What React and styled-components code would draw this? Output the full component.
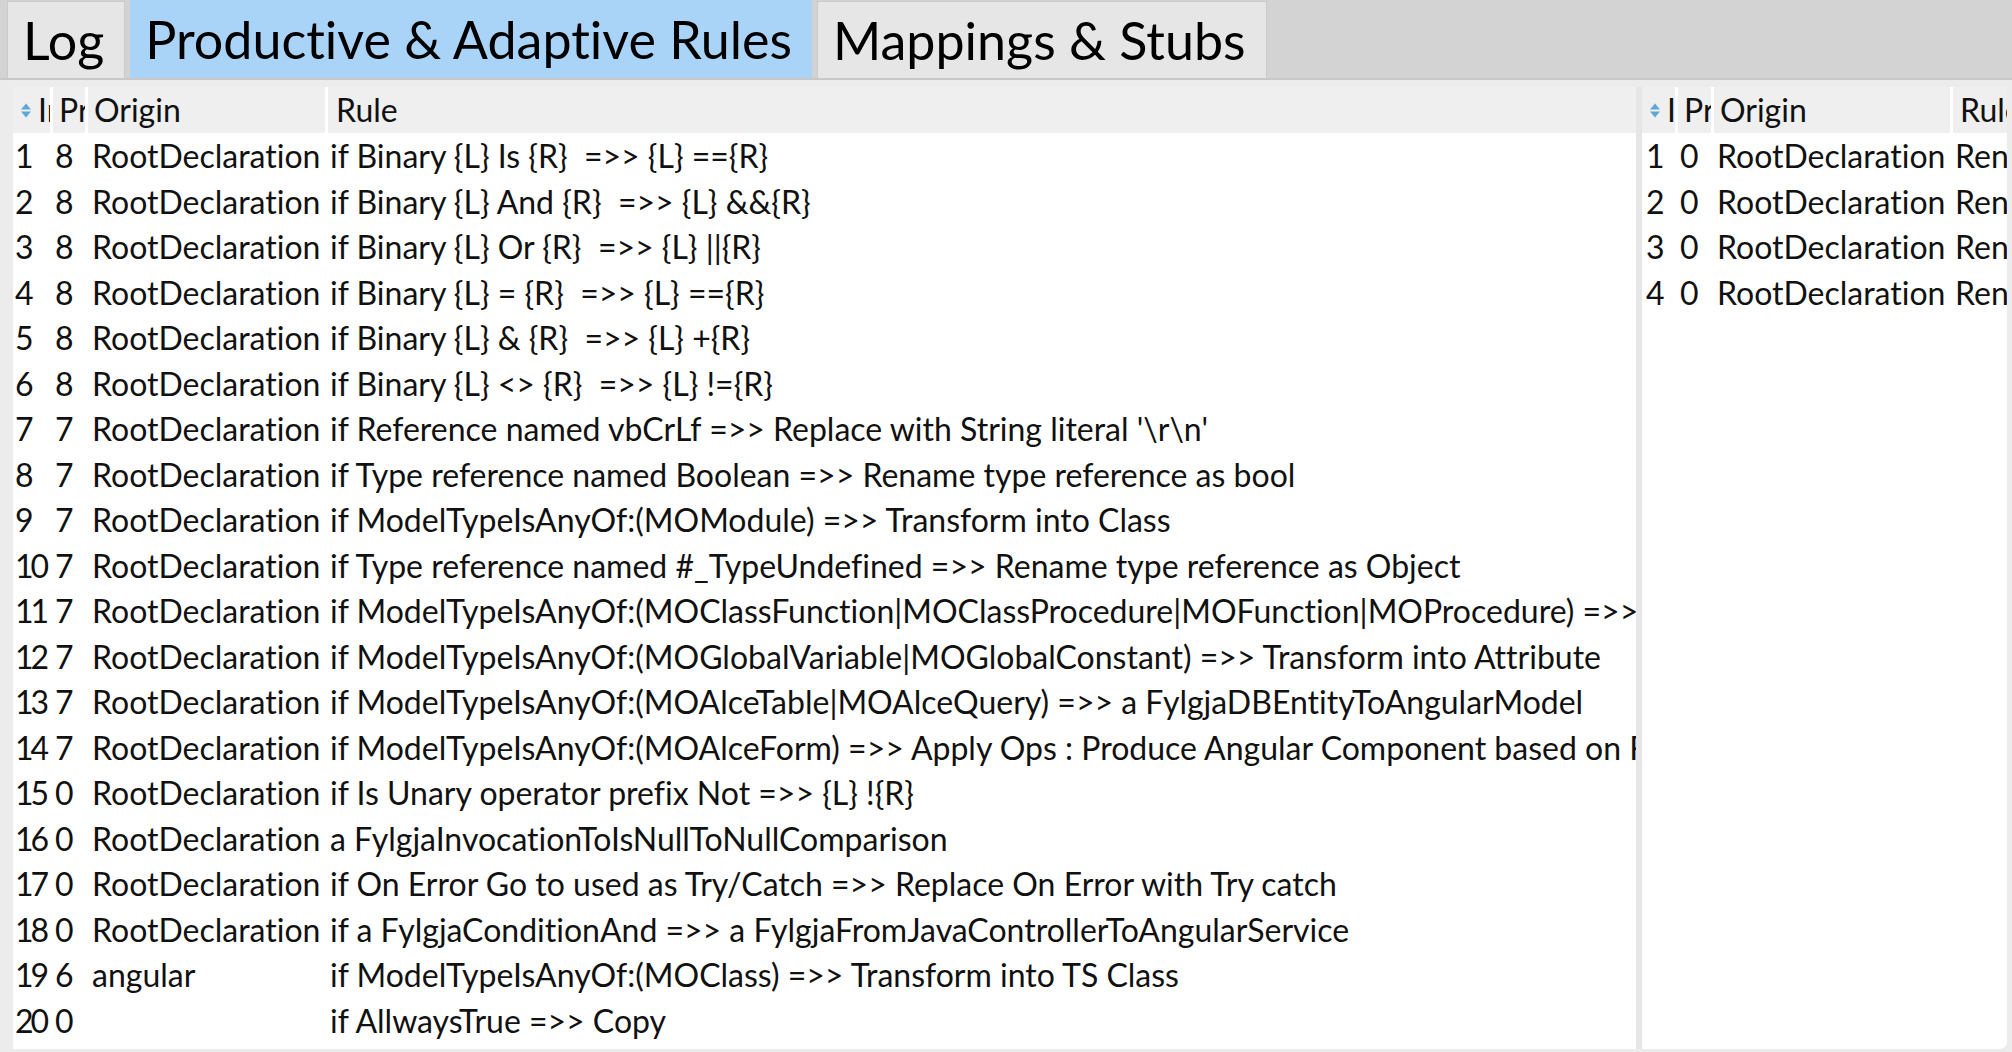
import styled, { createGlobalStyle } from 'styled-components';

// ── Data ─────────────────────────────────────────────────────────────────────
const rules = [
  ['1', '8', 'RootDeclaration', 'if Binary {L} Is {R}  =>> {L} =={R}'],
  ['2', '8', 'RootDeclaration', 'if Binary {L} And {R}  =>> {L} &&{R}'],
  ['3', '8', 'RootDeclaration', 'if Binary {L} Or {R}  =>> {L} ||{R}'],
  ['4', '8', 'RootDeclaration', 'if Binary {L} = {R}  =>> {L} =={R}'],
  ['5', '8', 'RootDeclaration', 'if Binary {L} & {R}  =>> {L} +{R}'],
  ['6', '8', 'RootDeclaration', 'if Binary {L} <> {R}  =>> {L} !={R}'],
  ['7', '7', 'RootDeclaration', "if Reference named vbCrLf =>> Replace with String literal '\\r\\n'"],
  ['8', '7', 'RootDeclaration', 'if Type reference named Boolean =>> Rename type reference as bool'],
  ['9', '7', 'RootDeclaration', 'if ModelTypeIsAnyOf:(MOModule) =>> Transform into Class'],
  ['10', '7', 'RootDeclaration', 'if Type reference named #_TypeUndefined =>> Rename type reference as Object'],
  ['11', '7', 'RootDeclaration', 'if ModelTypeIsAnyOf:(MOClassFunction|MOClassProcedure|MOFunction|MOProcedure) =>> Transform into Method'],
  ['12', '7', 'RootDeclaration', 'if ModelTypeIsAnyOf:(MOGlobalVariable|MOGlobalConstant) =>> Transform into Attribute'],
  ['13', '7', 'RootDeclaration', 'if ModelTypeIsAnyOf:(MOAlceTable|MOAlceQuery) =>> a FylgjaDBEntityToAngularModel'],
  ['14', '7', 'RootDeclaration', 'if ModelTypeIsAnyOf:(MOAlceForm) =>> Apply Ops : Produce Angular Component based on Form'],
  ['15', '0', 'RootDeclaration', 'if Is Unary operator prefix Not =>> {L} !{R}'],
  ['16', '0', 'RootDeclaration', 'a FylgjaInvocationToIsNullToNullComparison'],
  ['17', '0', 'RootDeclaration', 'if On Error Go to used as Try/Catch =>> Replace On Error with Try catch'],
  ['18', '0', 'RootDeclaration', 'if a FylgjaConditionAnd =>> a FylgjaFromJavaControllerToAngularService'],
  ['19', '6', 'angular', 'if ModelTypeIsAnyOf:(MOClass) =>> Transform into TS Class'],
  ['20', '0', '', 'if AllwaysTrue =>> Copy'],
];

const adaptive = [
  ['1', '0', 'RootDeclaration', 'Rename reference'],
  ['2', '0', 'RootDeclaration', 'Rename reference'],
  ['3', '0', 'RootDeclaration', 'Rename reference'],
  ['4', '0', 'RootDeclaration', 'Rename reference'],
];

const tabs = [
  { label: 'Log' },
  { label: 'Productive & Adaptive Rules', active: true },
  { label: 'Mappings & Stubs' },
];

// ── Styles ───────────────────────────────────────────────────────────────────
const GlobalStyle = createGlobalStyle`
  html, body {
    margin: 0;
    padding: 0;
    background: #e6e6e6;
  }
  body {
    font-family: Lato, "Open Sans", sans-serif;
    font-variant-ligatures: none;
    color: #111;
  }
`;

const Window = styled.div`
  height: 1052px;
  display: flex;
  flex-direction: column;
  overflow: hidden;
`;

const TabBar = styled.div`
  height: 80px;
  flex: none;
  display: flex;
  align-items: stretch;
  gap: 5px;
  padding: 0 0 0 7px;
  background: #d3d3d3;
  border-bottom: 2px solid #c8c8c8;
  box-sizing: border-box;
`;

const Tab = styled.div`
  display: flex;
  align-items: center;
  padding: 0 20px 0 15px;
  margin-top: ${(p) => (p.$active ? '0' : '1px')};
  font-size: 52px;
  white-space: nowrap;
  color: #000;
  background: ${(p) => (p.$active ? '#aad4f7' : '#e6e6e6')};
  border: ${(p) => (p.$active ? 'none' : '1px solid #cacaca')};
  border-bottom: none;
`;

const Body = styled.div`
  flex: 1;
  display: flex;
  padding: 7px 5px 3px 13px;
  background: #ececec;
  min-height: 0;
`;

const Panel = styled.div`
  background: #fff;
  overflow: hidden;
  display: flex;
  flex-direction: column;
  ${(p) => (p.$width ? `width: ${p.$width}px; flex: none;` : 'flex: 1; min-width: 0;')}
  ${(p) => p.$rounded && 'border-bottom-right-radius: 7px;'}
`;

const Splitter = styled.div`
  width: 6px;
  flex: none;
  background: #e6e6e6;
`;

const Row = styled.div`
  display: grid;
  grid-template-columns: ${(p) => p.$cols};
  height: ${(p) => (p.$head ? '46px' : '45.5px')};
  background: ${(p) => (p.$head ? '#efefef' : '#fff')};
  font-size: 32px;
  line-height: ${(p) => (p.$head ? '46px' : '45.5px')};
`;

const HeadCell = styled.div`
  display: flex;
  align-items: center;
  gap: 6px;
  padding-left: ${(p) => p.$pad || 5}px;
  border-right: ${(p) => (p.$last ? 'none' : '3px solid #fff')};
  overflow: hidden;
  white-space: nowrap;
`;

const Cell = styled.div`
  padding-left: ${(p) => p.$pad || 0}px;
  overflow: hidden;
  white-space: pre;
  letter-spacing: ${(p) => (p.$tight ? '-3px' : 'normal')};
`;

const SortIcon = () => (
  <svg width="12" height="17" viewBox="0 0 12 17" style={{ flex: 'none' }}>
    <path d="M1 7.5 L6 1.5 L11 7.5 Z" fill="#5fa6d8" />
    <path d="M1 9.5 L6 15.5 L11 9.5 Z" fill="#5fa6d8" />
  </svg>
);

// ── Components ───────────────────────────────────────────────────────────────
const RuleTable = ({ cols, data, pads, headPads }) => (
  <>
    <Row $head $cols={cols}>
      <HeadCell $pad={headPads[0]}>
        <SortIcon />
        <span>Index</span>
      </HeadCell>
      <HeadCell $pad={headPads[1]}>Priority</HeadCell>
      <HeadCell $pad={headPads[2]}>Origin</HeadCell>
      <HeadCell $pad={headPads[3]} $last>
        Rule
      </HeadCell>
    </Row>
    {data.map((r) => (
      <Row key={r[0]} $cols={cols}>
        {r.map((v, i) => (
          <Cell key={i} $pad={pads[i]} $tight={i === 0 && v.length > 1}>
            {v}
          </Cell>
        ))}
      </Row>
    ))}
  </>
);

const App = () => (
  <Window>
    <GlobalStyle />
    <TabBar>
      {tabs.map((t) => (
        <Tab key={t.label} $active={t.active}>
          {t.label}
        </Tab>
      ))}
    </TabBar>
    <Body>
      <Panel>
        <RuleTable
          cols="40px 35px 240px 1fr"
          data={rules}
          pads={[2, 2, 4, 2]}
          headPads={[7, 6, 6, 8]}
        />
      </Panel>
      <Splitter />
      <Panel $width={365} $rounded>
        <RuleTable
          cols="36px 36px 239px 1fr"
          data={adaptive}
          pads={[4, 2, 3, 2]}
          headPads={[7, 6, 6, 7]}
        />
      </Panel>
    </Body>
  </Window>
);

export default App;
